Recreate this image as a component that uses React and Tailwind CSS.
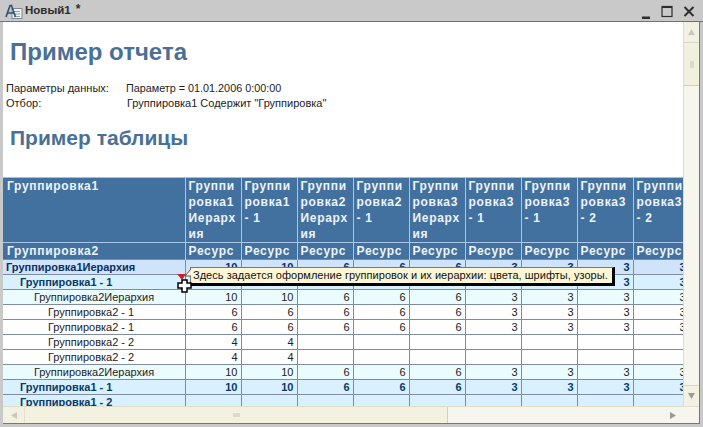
const F = "[font-family:'Liberation_Sans',Arial,sans-serif]";
const cols = [56, 56, 56, 56, 56, 56, 56, 56, 56];
const headers = [
  ["Группи", "ровка1", "Иерарх", "ия"],
  ["Группи", "ровка1", "- 1"],
  ["Группи", "ровка2", "Иерарх", "ия"],
  ["Группи", "ровка2", "- 1"],
  ["Группи", "ровка3", "Иерарх", "ия"],
  ["Группи", "ровка3", "- 1"],
  ["Группи", "ровка3", "- 1"],
  ["Группи", "ровка3", "- 2"],
  ["Группи", "ровка3", "- 2"],
];
const rows = [
  { label: "Группировка1Иерархия", pad: "pl-[3px]", kind: "top", v: [10, 10, 6, 6, 6, 3, 3, 3, 3] },
  { label: "Группировка1 - 1", pad: "pl-[17px]", kind: "group", v: [10, 10, 6, 6, 6, 3, 3, 3, 3] },
  { label: "Группировка2Иерархия", pad: "pl-[31px]", kind: "hier", v: [10, 10, 6, 6, 6, 3, 3, 3, 3] },
  { label: "Группировка2 - 1", pad: "pl-[45px]", kind: "leaf", v: [6, 6, 6, 6, 6, 3, 3, 3, 3] },
  { label: "Группировка2 - 1", pad: "pl-[45px]", kind: "leaf", v: [6, 6, 6, 6, 6, 3, 3, 3, 3] },
  { label: "Группировка2 - 2", pad: "pl-[45px]", kind: "leaf", v: [4, 4, "", "", "", "", "", "", ""] },
  { label: "Группировка2 - 2", pad: "pl-[45px]", kind: "leaf", v: [4, 4, "", "", "", "", "", "", ""] },
  { label: "Группировка2Иерархия", pad: "pl-[31px]", kind: "hier", v: [10, 10, 6, 6, 6, 3, 3, 3, 3] },
  { label: "Группировка1 - 1", pad: "pl-[17px]", kind: "group", v: [10, 10, 6, 6, 6, 3, 3, 3, 3] },
  { label: "Группировка1 - 2", pad: "pl-[17px]", kind: "group", v: ["", "", "", "", "", "", "", "", ""] },
];
const kindCls = {
  top: "bg-[#cfe4fb] text-[#0a2f63] font-bold",
  group: "bg-[#d9f0ff] text-[#0a3a66] font-bold",
  hier: "bg-[#ebfcff] text-[#222222]",
  leaf: "bg-white text-[#222222]",
};

function TriUp() {
  return <svg width="9" height="8" viewBox="0 0 9 8"><path d="M4.500 1 L8 7 L1 7 Z" fill="#c9c9bb" /></svg>;
}

export default function App() {
  return (
    <div className={`relative w-[703px] h-[427px] overflow-hidden bg-[#c9c9c9] flex flex-col ${F}`}>
      {/* title bar */}
      <div className="h-[22px] shrink-0 flex items-center pl-[5px] pr-[8px] bg-[#c9c9c9] border-b border-b-[#707070]">
        <svg width="18" height="15" viewBox="0 0 18 15" className="mr-[2px] mt-[1px]">
          <rect x="7" y="4.500" width="10" height="10" fill="#f2f2f2" stroke="#7b8794" />
          <path d="M9 7.500h6M9 10h6M9 12.500h6" stroke="#8aa0b8" />
          <path d="M1 13 L5 1.500 L6.500 1.500 L10.500 13 M2.500 9h6" fill="none" stroke="#2f4f6f" strokeWidth="1.600" />
        </svg>
        <span className="text-[11.500px] font-bold text-[#2c2c2c]">Новый1</span>
        <span className="text-[12px] font-bold text-[#2c2c2c] ml-[5px] -mt-[3px]">*</span>
        <div className="ml-auto flex items-center gap-[10px] mt-[2px]">
          <svg width="10" height="14" viewBox="0 0 10 14"><rect x="1" y="11.500" width="8" height="2.500" fill="#2e2e2e" /></svg>
          <svg width="12" height="13" viewBox="0 0 12 13"><rect x="1" y="1.500" width="10" height="10" fill="none" stroke="#2e2e2e" strokeWidth="1.200" /><rect x="1" y="1" width="10" height="2" fill="#2e2e2e" /></svg>
          <svg width="12" height="13" viewBox="0 0 12 13"><path d="M1.500 2 L10.500 11 M10.500 2 L1.500 11" stroke="#2e2e2e" strokeWidth="2" /></svg>
        </div>
      </div>

      {/* window body */}
      <div className="flex-1 min-h-0 flex flex-col ml-[3px] mr-[3px] mb-[3px] border-b border-b-[#777777] border-r border-r-[#777777] bg-white">
        <div className="flex-1 min-h-0 flex">
          {/* content */}
          <div className="w-[680px] shrink-0 overflow-hidden flex flex-col bg-white">
            <div className="pl-[7px] pt-[15px] h-[50px] shrink-0 text-[24px] leading-[29px] font-bold text-[#4a7097]">Пример отчета</div>
            <div className="pl-[3px] pt-[9px] h-[39px] shrink-0 text-[11px] leading-[15px] text-[#222222]">
              <div className="flex"><span className="w-[120px]">Параметры данных:</span><span className="text-[10.800px]">Параметр = 01.01.2006 0:00:00</span></div>
              <div className="flex"><span className="w-[121px]">Отбор:</span><span>Группировка1 Содержит "Группировка"</span></div>
            </div>
            <div className="pl-[7px] pt-[14px] h-[66px] shrink-0 text-[21px] leading-[26px] font-bold text-[#4a7097]">Пример таблицы</div>

            <table className="table-fixed border-collapse w-[686px] shrink-0 border-t border-t-[#a9c0d8] text-[11px]">
              <colgroup>
                <col className="w-[182px]" />
                {cols.map((w, i) => <col key={i} className="w-[56px]" />)}
              </colgroup>
              <thead>
                <tr className="h-[64px] bg-[#43719f] text-[#eef3f8] text-[12px] font-bold tracking-[0.7px] leading-[16px]">
                  <th className="align-top text-left pl-[4px] pt-[0px] font-bold border-r border-r-[#a9c6e6]">Группировка1</th>
                  {headers.map((h, i) => (
                    <th key={i} className="align-top text-left pl-[3px] pt-[0px] font-bold border-r border-r-[#a9c6e6] whitespace-nowrap overflow-hidden">
                      {h.map((l, j) => <div key={j}>{l}</div>)}
                    </th>
                  ))}
                </tr>
                <tr className="h-[17px] bg-[#43719f] text-[#eef3f8] text-[12px] font-bold tracking-[0.7px] leading-[16px] border-t border-t-[#a9c6e6]">
                  <th className="text-left pl-[4px] font-bold border-r border-r-[#a9c6e6]">Группировка2</th>
                  {headers.map((h, i) => (
                    <th key={i} className="text-left pl-[3px] font-bold border-r border-r-[#a9c6e6]">Ресурс</th>
                  ))}
                </tr>
              </thead>
              <tbody>
                {rows.map((r, i) => (
                  <tr key={i} className={`h-[15px] ${kindCls[r.kind]}`}>
                    <td className={`${r.pad} leading-[14px] border border-[#7f8ba5] border-l-0 whitespace-nowrap`}>{r.label}</td>
                    {r.v.map((x, j) => (
                      <td key={j} className="text-right pr-[3px] leading-[14px] border border-[#7f8ba5]">{x}</td>
                    ))}
                  </tr>
                ))}
              </tbody>
            </table>
          </div>

          {/* vertical scrollbar */}
          <div className="flex-1 flex flex-col bg-[#f7f6ee] border-l border-l-[#dedccb]">
            <div className="h-[21px] flex items-center justify-center border-b border-b-[#d8d6c4] bg-[#f3f2e2]"><TriUp /></div>
            <div className="h-[43px] flex items-center justify-center bg-[#f1f0dc] border-b border-b-[#d0cebb]">
              <div className="w-[4px] h-[7px] bg-[#dcdbca]" />
            </div>
            <div className="flex-1" />
            <div className="h-[21px] flex items-center justify-center border-t border-t-[#d8d6c4] bg-[#f3f2e2]">
              <svg width="9" height="8" viewBox="0 0 9 8"><path d="M1 1 L8 1 L4.500 7 Z" fill="#9a9a92" /></svg>
            </div>
          </div>
        </div>

        {/* horizontal scrollbar */}
        <div className="h-[17px] shrink-0 flex bg-[#f7f6ee] border-t border-t-[#dedccb]">
          <div className="w-[22px] flex items-center justify-center bg-[#f3f2e2] border-r border-r-[#e2e0d0]">
            <svg width="8" height="9" viewBox="0 0 8 9"><path d="M7 1 L7 8 L1 4.500 Z" fill="#c9c9bb" /></svg>
          </div>
          <div className="w-[423px] flex items-center justify-center bg-[#f3f2e0] border-r border-r-[#d0cebb]">
            <div className="w-[7px] h-[4px] bg-[#dcdbca]" />
          </div>
          <div className="flex-1" />
          <div className="w-[21px] mr-[16px] flex items-center justify-center">
            <svg width="8" height="9" viewBox="0 0 8 9"><path d="M1 1 L1 8 L7 4.500 Z" fill="#9a9a92" /></svg>
          </div>
        </div>
      </div>

      {/* comment marker, tooltip and cursor over the table */}
      <svg width="10" height="7" viewBox="0 0 10 7" className="absolute left-[177px] top-[274px]"><path d="M0 0 H9 L5 6 Z" fill="#c9202c" /></svg>
      <div className="absolute left-[190px] top-[267px] w-[425px] h-[19px] bg-[#fdf6d5] border-t border-t-[#777777] border-l border-l-[#777777] border-r-[3px] border-b-[3px] border-black text-[11px] tracking-[0.03px] leading-[14px] text-[#111111] pl-[2px] whitespace-nowrap">
        Здесь задается оформление группировок и их иерархии: цвета, шрифты, узоры.
      </div>
      <svg width="8" height="10" viewBox="0 0 8 10" className="absolute left-[184px] top-[268px]"><path d="M7 1 L1 8 L7 8" fill="#fdf6d5" stroke="#555555" /></svg>
      <svg width="15" height="14" viewBox="0 0 15 14" className="absolute left-[177px] top-[279px]">
        <path d="M5 1 H10 V4 H14 V9 H10 V13 H5 V9 H1 V4 H5 Z" fill="#ffffff" stroke="#000000" strokeWidth="1.500" />
      </svg>
    </div>
  );
}
